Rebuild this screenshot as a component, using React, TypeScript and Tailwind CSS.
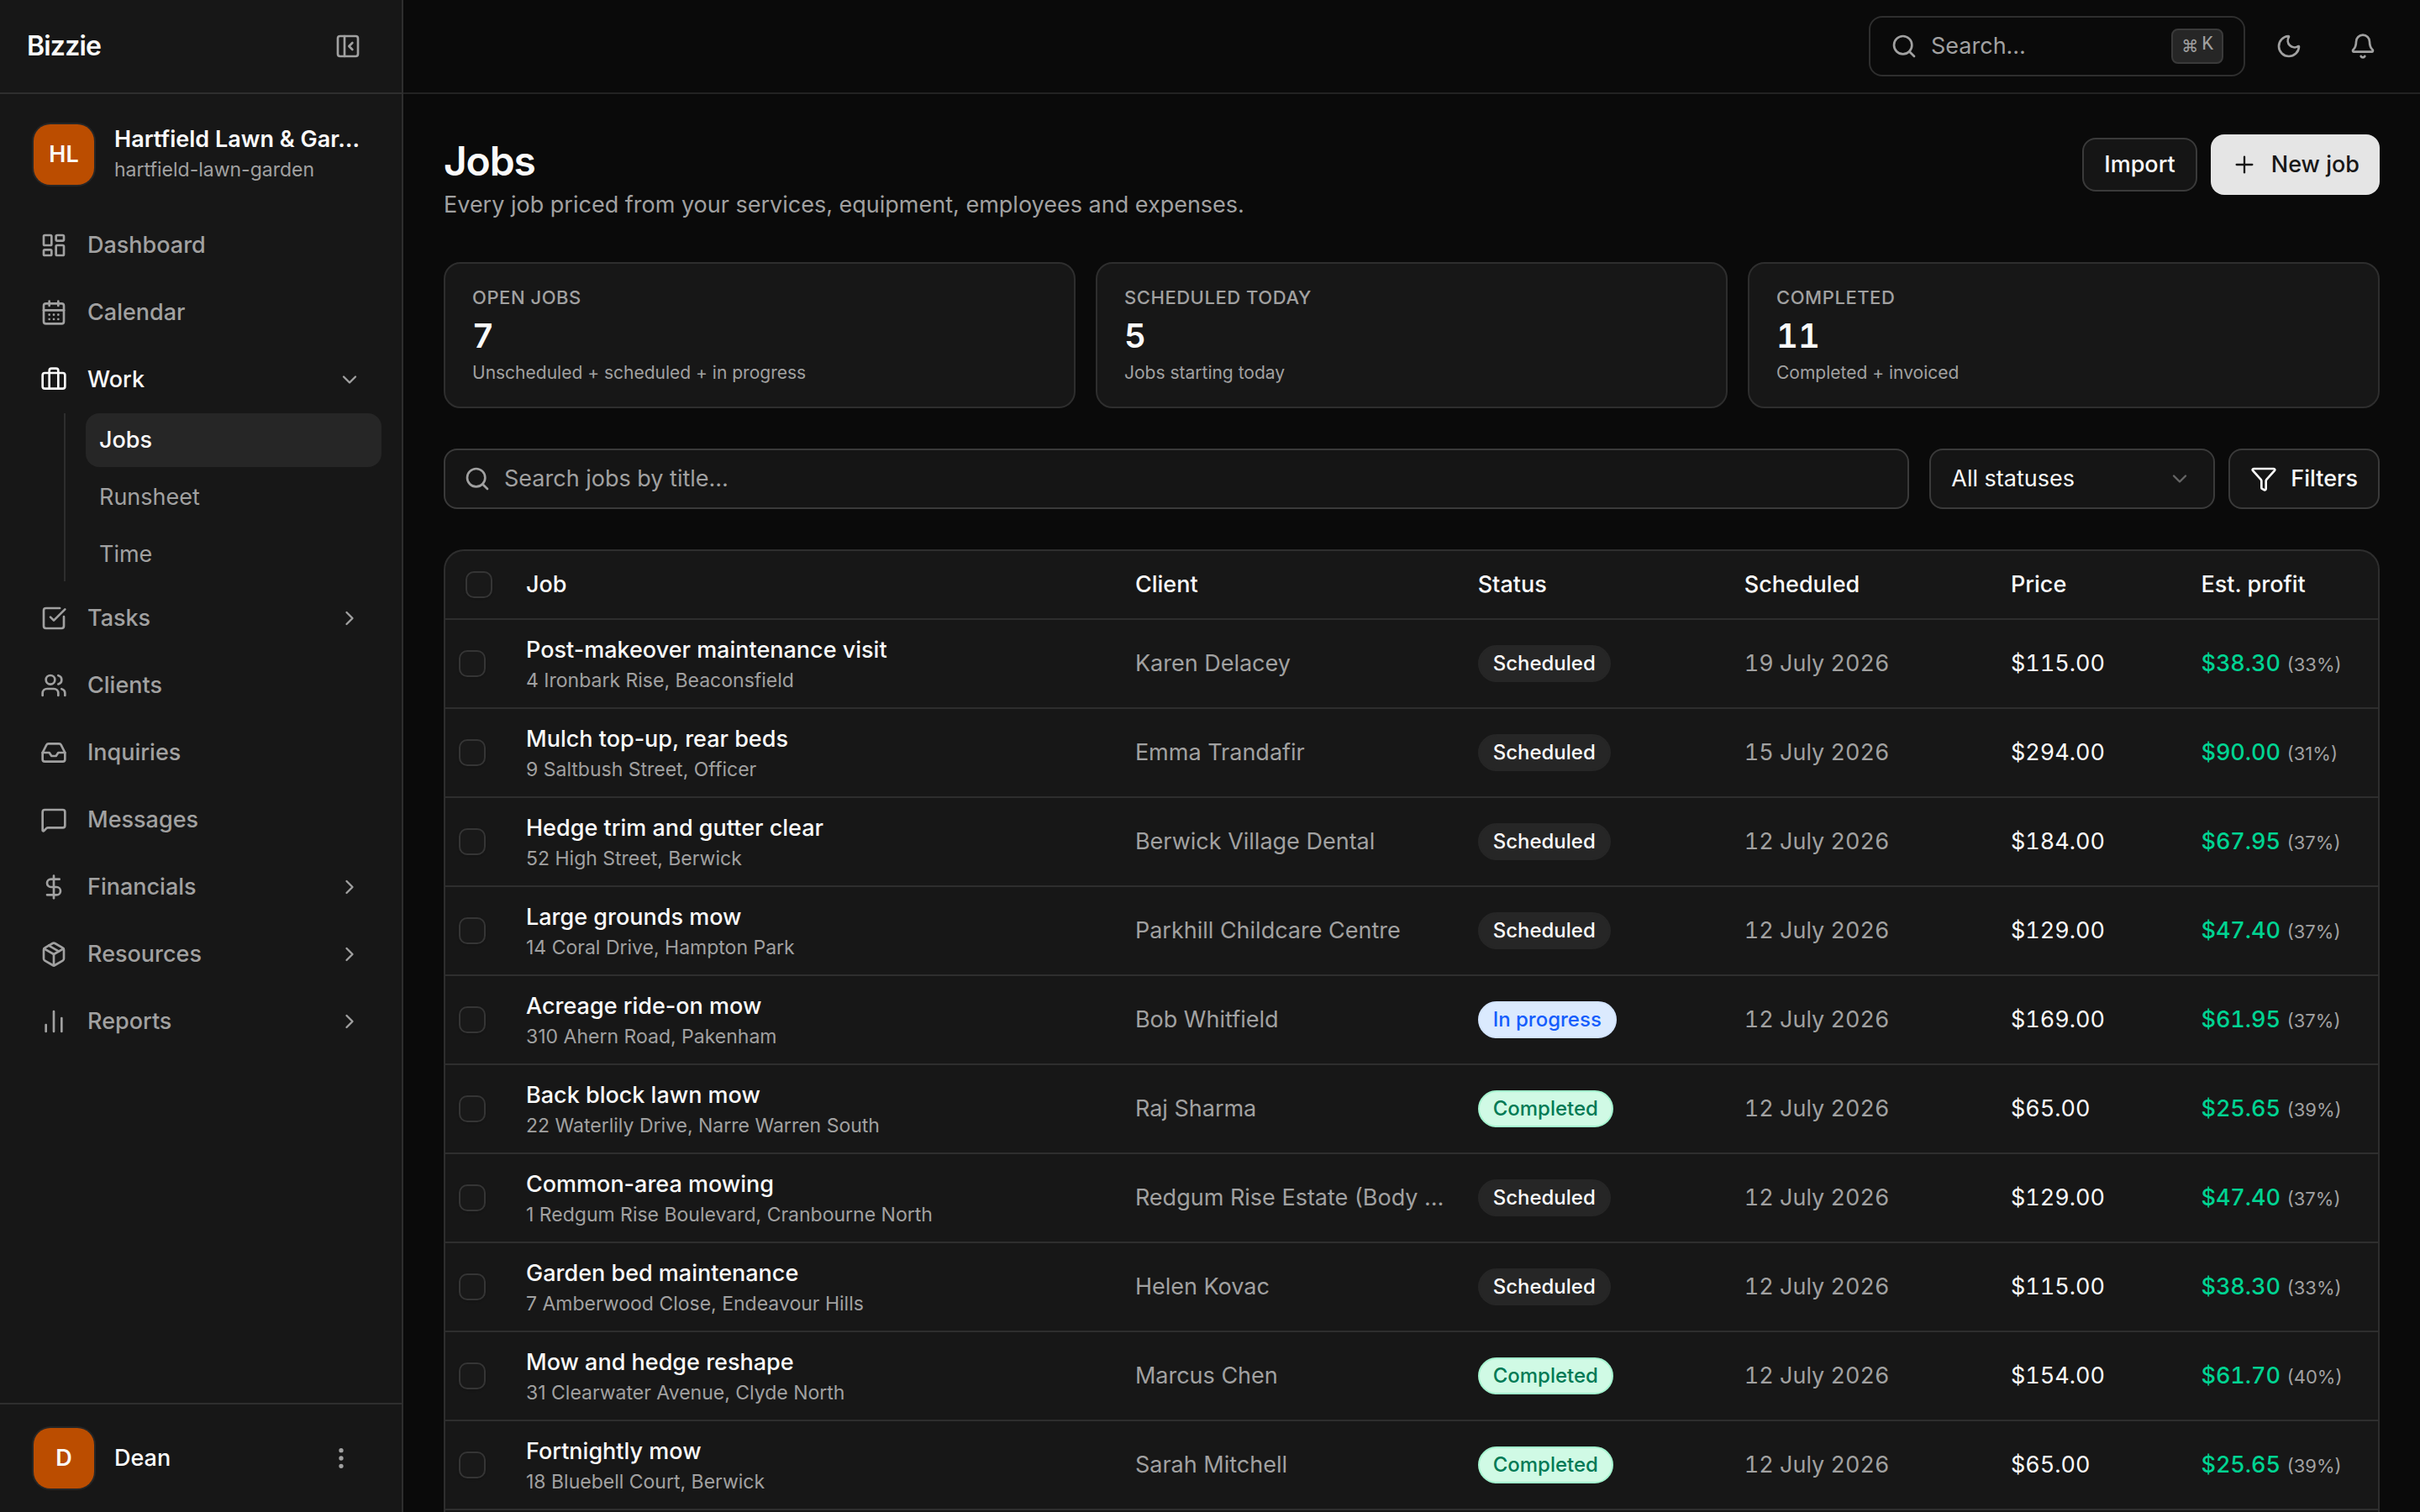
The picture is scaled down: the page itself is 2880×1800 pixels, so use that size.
import {
  Bell,
  Briefcase,
  CalendarDays,
  ChartNoAxesColumn,
  ChevronDown,
  ChevronRight,
  DollarSign,
  EllipsisVertical,
  Funnel,
  Inbox,
  LayoutDashboard,
  MessageSquare,
  Moon,
  Package,
  PanelLeftClose,
  Plus,
  Search,
  SquareCheckBig,
  Users,
  type LucideIcon,
} from 'lucide-react';

type NavItem = {
  label: string;
  icon: LucideIcon;
  expandable?: boolean;
  children?: string[];
};

type Status = 'Scheduled' | 'In progress' | 'Completed';

const navItems: NavItem[] = [
  { label: 'Dashboard', icon: LayoutDashboard },
  { label: 'Calendar', icon: CalendarDays },
  { label: 'Work', icon: Briefcase, children: ['Jobs', 'Runsheet', 'Time'] },
  { label: 'Tasks', icon: SquareCheckBig, expandable: true },
  { label: 'Clients', icon: Users },
  { label: 'Inquiries', icon: Inbox },
  { label: 'Messages', icon: MessageSquare },
  { label: 'Financials', icon: DollarSign, expandable: true },
  { label: 'Resources', icon: Package, expandable: true },
  { label: 'Reports', icon: ChartNoAxesColumn, expandable: true },
];

const stats = [
  { label: 'Open jobs', value: '7', hint: 'Unscheduled + scheduled + in progress' },
  { label: 'Scheduled today', value: '5', hint: 'Jobs starting today' },
  { label: 'Completed', value: '11', hint: 'Completed + invoiced' },
];

const jobs: {
  title: string;
  address: string;
  client: string;
  status: Status;
  date: string;
  price: string;
  profit: string;
  margin: string;
}[] = [
  { title: 'Post-makeover maintenance visit', address: '4 Ironbark Rise, Beaconsfield', client: 'Karen Delacey', status: 'Scheduled', date: '19 July 2026', price: '$115.00', profit: '$38.30', margin: '33%' },
  { title: 'Mulch top-up, rear beds', address: '9 Saltbush Street, Officer', client: 'Emma Trandafir', status: 'Scheduled', date: '15 July 2026', price: '$294.00', profit: '$90.00', margin: '31%' },
  { title: 'Hedge trim and gutter clear', address: '52 High Street, Berwick', client: 'Berwick Village Dental', status: 'Scheduled', date: '12 July 2026', price: '$184.00', profit: '$67.95', margin: '37%' },
  { title: 'Large grounds mow', address: '14 Coral Drive, Hampton Park', client: 'Parkhill Childcare Centre', status: 'Scheduled', date: '12 July 2026', price: '$129.00', profit: '$47.40', margin: '37%' },
  { title: 'Acreage ride-on mow', address: '310 Ahern Road, Pakenham', client: 'Bob Whitfield', status: 'In progress', date: '12 July 2026', price: '$169.00', profit: '$61.95', margin: '37%' },
  { title: 'Back block lawn mow', address: '22 Waterlily Drive, Narre Warren South', client: 'Raj Sharma', status: 'Completed', date: '12 July 2026', price: '$65.00', profit: '$25.65', margin: '39%' },
  { title: 'Common-area mowing', address: '1 Redgum Rise Boulevard, Cranbourne North', client: 'Redgum Rise Estate (Body …', status: 'Scheduled', date: '12 July 2026', price: '$129.00', profit: '$47.40', margin: '37%' },
  { title: 'Garden bed maintenance', address: '7 Amberwood Close, Endeavour Hills', client: 'Helen Kovac', status: 'Scheduled', date: '12 July 2026', price: '$115.00', profit: '$38.30', margin: '33%' },
  { title: 'Mow and hedge reshape', address: '31 Clearwater Avenue, Clyde North', client: 'Marcus Chen', status: 'Completed', date: '12 July 2026', price: '$154.00', profit: '$61.70', margin: '40%' },
  { title: 'Fortnightly mow', address: '18 Bluebell Court, Berwick', client: 'Sarah Mitchell', status: 'Completed', date: '12 July 2026', price: '$65.00', profit: '$25.65', margin: '39%' },
];

const statusStyles: Record<Status, string> = {
  Scheduled: 'border-[#262626] bg-[#262626] text-neutral-50',
  'In progress': 'border-[#d3e4ff] bg-[#dbeafe] text-[#155dfc]',
  Completed: 'border-[#a4f4cf] bg-[#d0fae5] text-[#007a55]',
};

const checkboxClass =
  'block size-8 appearance-none rounded-[10px] border-2 border-[#353535] bg-[#191919] shadow-sm checked:bg-neutral-200';

function Avatar({ initials }: { initials: string }) {
  return (
    <div className="flex size-[72px] shrink-0 items-center justify-center rounded-[20px] bg-[#bb4d00] text-[27px] font-semibold text-neutral-50 ring-2 ring-[#262626]">
      {initials}
    </div>
  );
}

function Sidebar() {
  return (
    <aside className="flex w-[480px] shrink-0 flex-col border-r-2 border-[#2e2e2e] bg-[#171717]">
      <div className="flex h-28 shrink-0 items-center justify-between border-b-2 border-[#2e2e2e] pr-12 pl-8">
        <span className="text-[32px] font-semibold tracking-tight">Bizzie</span>
        <button type="button" aria-label="Collapse sidebar" className="text-[#a1a1a1]">
          <PanelLeftClose className="size-8" />
        </button>
      </div>

      <div className="flex items-center gap-6 py-9 pr-6 pl-10">
        <Avatar initials="HL" />
        <div className="min-w-0">
          <div className="truncate text-[27px] leading-9 font-semibold">Hartfield Lawn &amp; Gar…</div>
          <div className="truncate text-[23px] leading-9 text-[#a1a1a1]">hartfield-lawn-garden</div>
        </div>
      </div>

      <nav className="flex flex-1 flex-col gap-2 px-6">
        {navItems.map(({ label, icon: Icon, expandable, children }) => (
          <div key={label}>
            <a
              href="#"
              className={`flex h-[72px] items-center gap-6 rounded-[20px] px-6 text-[27px] font-medium ${
                children ? 'text-neutral-50' : 'text-[#a1a1a1]'
              }`}
            >
              <Icon className="size-8" />
              <span className="flex-1">{label}</span>
              {children && <ChevronDown className="size-7 text-[#a1a1a1]" />}
              {expandable && <ChevronRight className="size-7" />}
            </a>
            {children && (
              <div className="mt-1 ml-[52px] flex flex-col gap-1 border-l-2 border-[#2e2e2e] pl-6">
                {children.map((child, index) => (
                  <a
                    key={child}
                    href="#"
                    className={`flex h-16 items-center rounded-[16px] px-4 text-[27px] ${
                      index === 0 ? 'bg-[#262626] font-medium text-neutral-50' : 'text-[#a1a1a1]'
                    }`}
                  >
                    {child}
                  </a>
                ))}
              </div>
            )}
          </div>
        ))}
      </nav>

      <div className="flex h-[130px] shrink-0 items-center gap-6 border-t-2 border-[#2e2e2e] pr-14 pl-10">
        <Avatar initials="D" />
        <span className="flex-1 text-[27px] font-medium">Dean</span>
        <button type="button" aria-label="Account menu" className="text-[#a1a1a1]">
          <EllipsisVertical className="size-8" />
        </button>
      </div>
    </aside>
  );
}

function TopBar() {
  return (
    <header className="flex h-28 shrink-0 items-center justify-end gap-4 border-b-2 border-[#222222] px-8 text-[#a1a1a1]">
      <button
        type="button"
        className="flex h-[72px] w-[448px] items-center gap-4 rounded-[16px] border-2 border-[#2e2e2e] px-6 text-[27px]"
      >
        <Search className="size-8" />
        <span className="flex-1 text-left">Search…</span>
        <kbd className="flex h-[42px] items-center gap-1 rounded-lg border-2 border-[#3a3a3a] bg-[#262626] px-2.5 text-xl">
          <span className="font-['DejaVu_Sans',sans-serif]">⌘</span>
          <span className="pb-1 font-['Liberation_Mono',monospace] text-[23px] leading-none">K</span>
        </kbd>
      </button>
      <button type="button" aria-label="Toggle theme" className="flex size-[72px] items-center justify-center">
        <Moon className="size-8" />
      </button>
      <button type="button" aria-label="Notifications" className="flex size-[72px] items-center justify-center">
        <Bell className="size-8" />
      </button>
    </header>
  );
}

function JobsTable() {
  return (
    <div className="flex-1 overflow-hidden rounded-t-[24px] border-2 border-b-0 border-[#2e2e2e] bg-[#171717]">
      <table className="w-full table-fixed text-left text-[27px] leading-10">
        <colgroup>
          <col className="w-20" />
          <col className="w-[32%]" />
          <col className="w-[18%]" />
          <col className="w-[14%]" />
          <col className="w-[14%]" />
          <col className="w-[10%]" />
          <col className="w-[10%]" />
        </colgroup>
        <thead>
          <tr className="h-[81px] border-b-2 border-[#2e2e2e]">
            <th className="pl-6">
              <input type="checkbox" aria-label="Select all jobs" className={checkboxClass} />
            </th>
            {['Job', 'Client', 'Status', 'Scheduled', 'Price', 'Est. profit'].map((heading) => (
              <th key={heading} className="px-4 font-medium">
                {heading}
              </th>
            ))}
          </tr>
        </thead>
        <tbody>
          {jobs.map((job) => (
            <tr key={job.title} className="h-[106px] border-b-2 border-[#2e2e2e]">
              <td className="pl-4">
                <input type="checkbox" aria-label={`Select ${job.title}`} className={checkboxClass} />
              </td>
              <td className="px-4">
                <div className="truncate font-medium">{job.title}</div>
                <div className="truncate text-[23px] leading-8 text-[#a1a1a1]">{job.address}</div>
              </td>
              <td className="truncate px-4 text-[#a1a1a1]">{job.client}</td>
              <td className="px-4">
                <span
                  className={`flex h-11 w-fit items-center rounded-full border-2 px-4 text-2xl font-medium ${statusStyles[job.status]}`}
                >
                  {job.status}
                </span>
              </td>
              <td className="px-4 text-[#a1a1a1] tabular-nums">{job.date}</td>
              <td className="px-4 tabular-nums">{job.price}</td>
              <td className="px-4 whitespace-nowrap">
                <span className="font-medium text-[#00d492] tabular-nums">{job.profit}</span>{' '}
                <span className="text-[22px] text-[#a1a1a1]">({job.margin})</span>
              </td>
            </tr>
          ))}
        </tbody>
      </table>
    </div>
  );
}

export default function App() {
  return (
    <div className="flex h-screen overflow-hidden bg-[#0a0a0a] font-[Inter,sans-serif] text-neutral-50">
      <Sidebar />
      <div className="flex min-w-0 flex-1 flex-col">
        <TopBar />
        <main className="flex min-h-0 flex-1 flex-col gap-12 px-12 pt-12">
          <div className="flex items-start justify-between">
            <div>
              <h1 className="text-5xl leading-[64px] font-semibold tracking-tight">Jobs</h1>
              <p className="text-[27px] leading-10 text-[#a1a1a1]">
                Every job priced from your services, equipment, employees and expenses.
              </p>
            </div>
            <div className="flex items-center gap-4 text-[27px] font-medium">
              <button type="button" className="h-16 rounded-[16px] border-2 border-[#3a3a3a] bg-[#151515] px-6">
                Import
              </button>
              <button
                type="button"
                className="flex h-[72px] items-center gap-4 rounded-[16px] bg-[#e5e5e5] px-6 text-[#171717]"
              >
                <Plus className="size-8" strokeWidth={1.75} />
                New job
              </button>
            </div>
          </div>

          <div className="grid grid-cols-3 gap-6">
            {stats.map((stat) => (
              <div key={stat.label} className="rounded-[20px] border-2 border-[#2e2e2e] bg-[#171717] px-8 py-[26px]">
                <div className="text-[22px] leading-7 font-medium tracking-wide text-[#a1a1a1] uppercase">
                  {stat.label}
                </div>
                <div className="mt-2 text-[40px] leading-[48px] font-semibold tabular-nums">{stat.value}</div>
                <div className="mt-1.5 text-[21px] leading-7 text-[#a1a1a1]">{stat.hint}</div>
              </div>
            ))}
          </div>

          <div className="flex gap-4 text-[27px]">
            <label className="mr-2 flex h-[72px] flex-1 items-center gap-4 rounded-[16px] border-2 border-[#3a3a3a] bg-[#151515] px-[22px] text-[#a1a1a1]">
              <Search className="size-8" />
              <input
                type="text"
                aria-label="Search jobs"
                placeholder="Search jobs by title…"
                className="flex-1 bg-transparent outline-none placeholder:text-[#a1a1a1]"
              />
            </label>
            <div className="relative w-[340px]">
              <select
                aria-label="Status"
                className="h-[72px] w-full appearance-none rounded-[16px] border-2 border-[#3a3a3a] bg-[#151515] px-6"
              >
                <option>All statuses</option>
              </select>
              <ChevronDown className="pointer-events-none absolute top-[22px] right-7 size-7 text-[#666666]" />
            </div>
            <button
              type="button"
              className="flex h-[72px] items-center gap-4 rounded-[16px] border-2 border-[#3a3a3a] bg-[#151515] px-6 font-medium"
            >
              <Funnel className="size-8" />
              Filters
            </button>
          </div>

          <JobsTable />
        </main>
      </div>
    </div>
  );
}
